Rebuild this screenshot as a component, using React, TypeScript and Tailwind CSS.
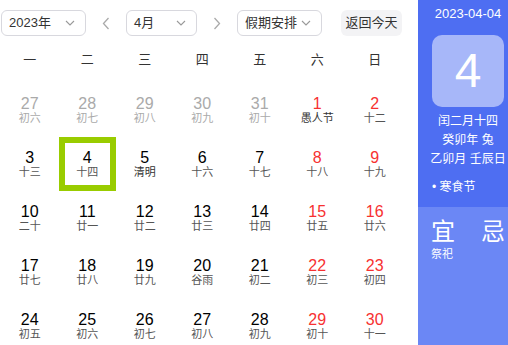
import React from 'react';

type Day = { d: number; l: string; muted?: boolean; red?: boolean; fest?: boolean; today?: boolean };

const weeks: Day[][] = [
    [
        { d: 27, l: '初六', muted: true },
        { d: 28, l: '初七', muted: true },
        { d: 29, l: '初八', muted: true },
        { d: 30, l: '初九', muted: true },
        { d: 31, l: '初十', muted: true },
        { d: 1, l: '愚人节', red: true, fest: true },
        { d: 2, l: '十二', red: true },
    ],
    [
        { d: 3, l: '十三' },
        { d: 4, l: '十四', today: true },
        { d: 5, l: '清明', fest: true },
        { d: 6, l: '十六' },
        { d: 7, l: '十七' },
        { d: 8, l: '十八', red: true },
        { d: 9, l: '十九', red: true },
    ],
    [
        { d: 10, l: '二十' },
        { d: 11, l: '廿一' },
        { d: 12, l: '廿二' },
        { d: 13, l: '廿三' },
        { d: 14, l: '廿四' },
        { d: 15, l: '廿五', red: true },
        { d: 16, l: '廿六', red: true },
    ],
    [
        { d: 17, l: '廿七' },
        { d: 18, l: '廿八' },
        { d: 19, l: '廿九' },
        { d: 20, l: '谷雨' },
        { d: 21, l: '初二' },
        { d: 22, l: '初三', red: true },
        { d: 23, l: '初四', red: true },
    ],
    [
        { d: 24, l: '初五' },
        { d: 25, l: '初六' },
        { d: 26, l: '初七' },
        { d: 27, l: '初八' },
        { d: 28, l: '初九' },
        { d: 29, l: '初十', red: true },
        { d: 30, l: '十一', red: true },
    ],
];

const Chevron = () => (
    <svg width="10" height="6" viewBox="0 0 10 6" fill="none" stroke="#999" strokeWidth="1.1">
        <path d="M1 1l4 4 4-4" />
    </svg>
);

const Select = ({ label, w }: { label: string; w: string }) => (
    <div className={`${w} h-[26px] flex items-center justify-between pl-[7px] pr-[10px] border border-[#d8d8de] rounded-[6px] text-[13px] text-[#333]`}>
        <span>{label}</span>
        <Chevron />
    </div>
);

const Arrow = ({ left }: { left?: boolean }) => (
    <svg width="8" height="13" viewBox="0 0 8 13" fill="none" stroke="#aaa" strokeWidth="1.3">
        <path d={left ? 'M6.5 1L1.5 6.5l5 5.5' : 'M1.5 1l5 5.5-5 5.5'} />
    </svg>
);

export default function App() {
    return (
        <div className="w-[508px] h-[345px] overflow-hidden bg-white flex font-['Liberation_Sans','Noto_Sans_CJK_SC',sans-serif]">
            {/* Calendar */}
            <div className="w-[418px] shrink-0 pl-[1px]">
                <div className="flex items-center h-[26px] mt-[10px]">
                    <Select label="2023年" w="w-[85px]" />
                    <div className="w-[40px] flex justify-center"><Arrow left /></div>
                    <Select label="4月" w="w-[71px]" />
                    <div className="w-[40px] flex justify-center"><Arrow /></div>
                    <Select label="假期安排" w="w-[85px]" />
                    <div className="ml-[19px] w-[61px] h-[26px] rounded-[6px] bg-[#f3f3f5] flex items-center justify-center text-[13px] text-[#333]">
                        返回今天
                    </div>
                </div>

                <div className="grid grid-cols-[repeat(7,57.5px)] h-[47px] items-center text-[13px] text-[#333]">
                    {['一', '二', '三', '四', '五', '六', '日'].map((w) => (
                        <div key={w} className="text-center">{w}</div>
                    ))}
                </div>

                {weeks.map((row, i) => (
                    <div key={i} className="grid grid-cols-[repeat(7,57.5px)]">
                        {row.map((c, j) => (
                            <div
                                key={j}
                                className={`h-[54px] flex flex-col items-center justify-center ${c.today ? 'border-[6px] border-[#99cc00]' : ''}`}
                            >
                                <div
                                    className={`text-[16px] leading-[17px] ${c.muted ? 'text-[#aaa]' : c.red ? 'text-[#f73131]' : 'text-[#000]'}`}
                                >
                                    {c.d}
                                </div>
                                <div
                                    className={`text-[11px] leading-[13px] ${c.muted ? 'text-[#aaa]' : c.fest ? 'text-[#333]' : 'text-[#555]'}`}
                                >
                                    {c.l}
                                </div>
                            </div>
                        ))}
                    </div>
                ))}
            </div>

            {/* Side panel */}
            <div className="w-[100px] shrink-0 flex flex-col text-white">
                <div className="h-[207px] bg-[#4e6ef2] flex flex-col items-center">
                    <div className="mt-[6px] text-[13px] leading-[16px]">2023-04-04</div>
                    <div className="mt-[13px] w-[72px] h-[72px] rounded-[10px] bg-white/50 flex items-center justify-center text-[48px] font-light">
                        4
                    </div>
                    <div className="mt-[5px] text-[12px] leading-[19px] text-center">
                        <div>闰二月十四</div>
                        <div>癸卯年 兔</div>
                        <div>乙卯月 壬辰日</div>
                    </div>
                    <div className="self-start ml-[14px] mt-[10px] text-[12px] leading-[16px]">• 寒食节</div>
                </div>
                <div className="flex-1 bg-[#6b87f5] px-[13px] pt-[11px]">
                    <div className="flex justify-between text-[24px] leading-[27px]">
                        <span>宜</span>
                        <span>忌</span>
                    </div>
                    <div className="mt-[2px] text-[11px] leading-[14px]">祭祀</div>
                </div>
            </div>
        </div>
    );
}
